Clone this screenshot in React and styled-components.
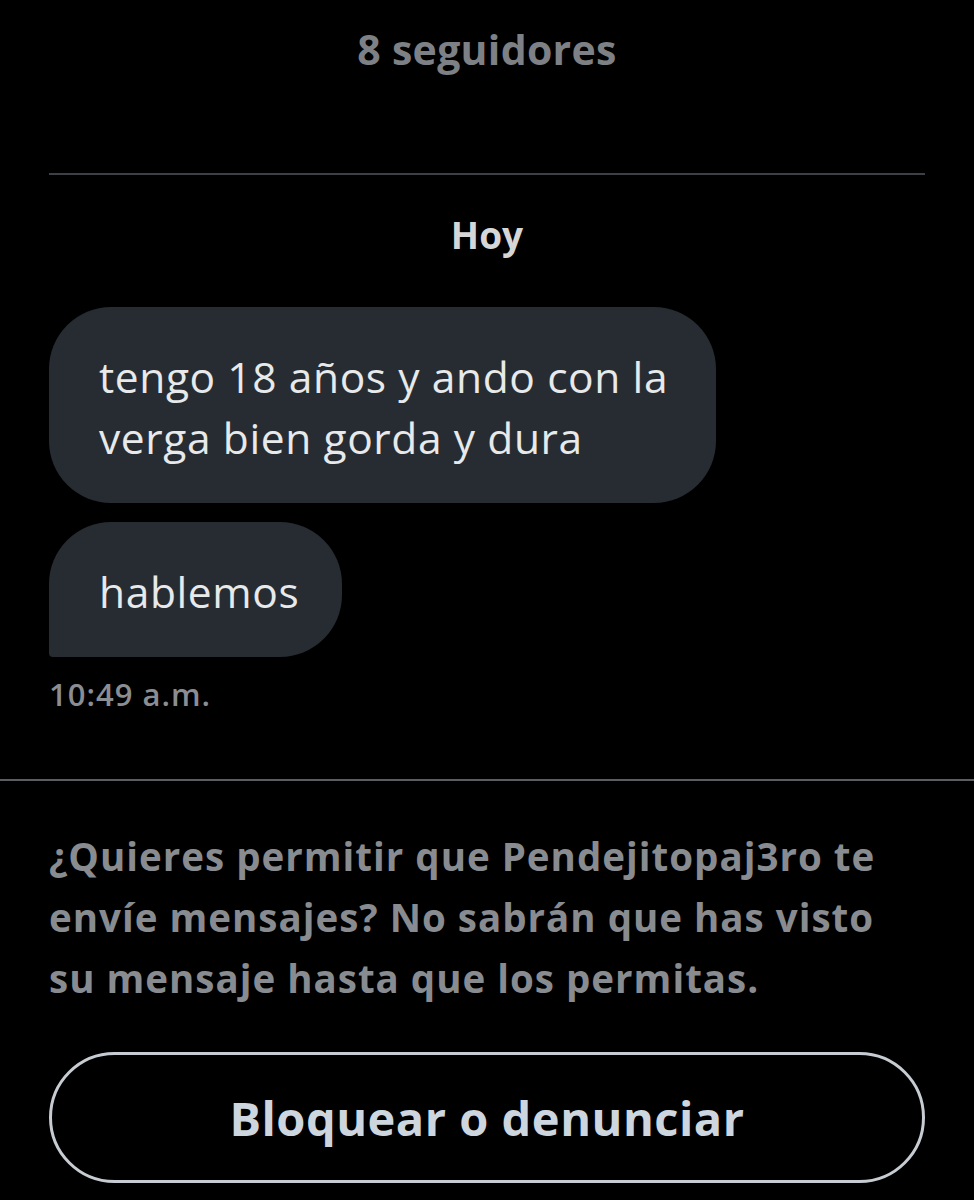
import React from "react";
import styled, { createGlobalStyle } from "styled-components";

const Global = createGlobalStyle`
  html, body { margin: 0; padding: 0; background: #000; }
  body { font-family: "Open Sans", Roboto, "Liberation Sans", sans-serif; -webkit-font-smoothing: antialiased; }
`;

const Page = styled.div`
  width: 974px;
  min-height: 1200px;
  background: #000;
  display: flex;
  flex-direction: column;
  padding-top: 24px;
  box-sizing: border-box;
`;

const Section = styled.div`
  padding: 0 49px;
  display: flex;
  flex-direction: column;
`;

const Followers = styled.div`
  text-align: center;
  font-size: 41px;
  line-height: 50px;
  font-weight: 700;
  letter-spacing: 0.3px;
  color: #7d8186;
`;

const Rule = styled.hr`
  border: 0;
  height: 2px;
  margin: ${(p) => p.$m};
  background: ${(p) => p.$c};
`;

const DayLabel = styled.div`
  text-align: center;
  font-size: 37px;
  line-height: 44px;
  font-weight: 700;
  color: #d6d6d6;
  margin-bottom: 50px;
`;

const Thread = styled.div`
  display: flex;
  flex-direction: column;
  align-items: flex-start;
  gap: 19px;
`;

const Bubble = styled.div`
  max-width: 574px;
  padding: 39px 43px 35px 50px;
  background: #262c32;
  color: #e7e9ea;
  font-size: 42.5px;
  line-height: 61px;
  font-weight: 400;
  letter-spacing: 0.6px;
  border-radius: 62px 62px 62px ${(p) => (p.$last ? "4px" : "62px")};
`;

const Time = styled.div`
  margin-top: 19px;
  font-size: 31px;
  line-height: 36px;
  font-weight: 600;
  letter-spacing: 1px;
  color: #8a8e93;
`;

const Notice = styled.p`
  margin: 0;
  font-size: 38.5px;
  line-height: 61px;
  font-weight: 700;
  letter-spacing: 1px;
  color: #888c91;
`;

const OutlineButton = styled.button`
  margin-top: 43px;
  height: 131px;
  border-radius: 66px;
  border: 3px solid #c6ccd2;
  background: transparent;
  color: #cdd6de;
  font-family: inherit;
  font-size: 47px;
  font-weight: 700;
  letter-spacing: 0.5px;
  display: flex;
  align-items: center;
  justify-content: center;
  padding: 0;
`;

export default function App() {
  return (
    <Page>
      <Global />
      <Section>
        <Followers>8 seguidores</Followers>
        <Rule $m="99px 0 38px" $c="#3d4044" />
        <DayLabel>Hoy</DayLabel>
        <Thread>
          <Bubble>tengo 18 años y ando con la verga bien gorda y dura</Bubble>
          <Bubble $last>hablemos</Bubble>
        </Thread>
        <Time>10:49 a.m.</Time>
      </Section>
      <Rule $m="67px 0 45px" $c="#5a5d61" />
      <Section>
        <Notice>
          ¿Quieres permitir que Pendejitopaj3ro te envíe mensajes? No sabrán que has visto su mensaje hasta que los permitas.
        </Notice>
        <OutlineButton>Bloquear o denunciar</OutlineButton>
      </Section>
    </Page>
  );
}
